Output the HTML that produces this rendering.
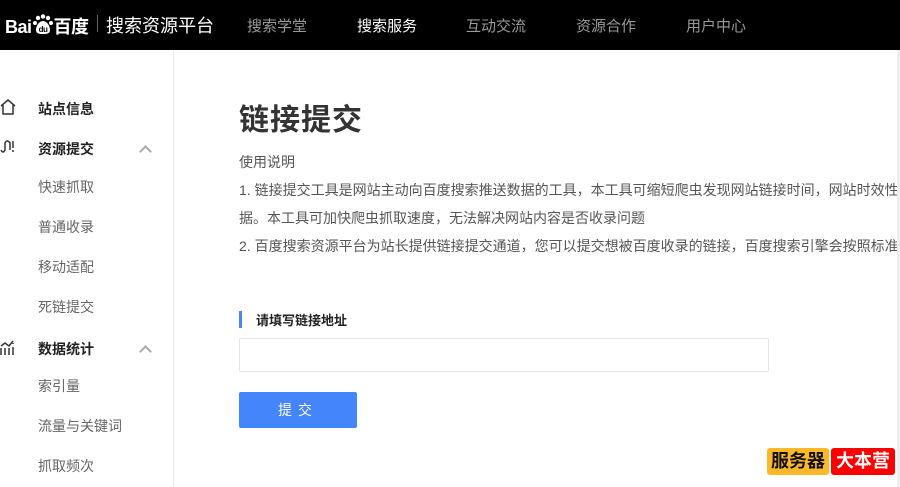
<!DOCTYPE html>
<html><head><meta charset="utf-8"><style>
*{margin:0;padding:0;box-sizing:border-box}
body{width:900px;height:487px;overflow:hidden;background:#fff;font-family:"Liberation Sans","Noto Sans CJK SC",sans-serif;position:relative}
.top{position:absolute;left:0;top:0;width:900px;height:50px;background:#000}
.logo{position:absolute;left:5px;top:13px;color:#fff;font-weight:bold;font-size:18px;letter-spacing:-0.5px;white-space:nowrap}
.sep{position:absolute;left:97px;top:15px;width:1px;height:17px;background:#666}
.ptitle{position:absolute;left:106px;top:12px;color:#fff;font-size:18px}
.nav{position:absolute;top:15px;color:#999;font-size:15px}
.side{position:absolute;left:0;top:50px;width:174px;height:437px;border-right:1px solid #e8e8e8}
.si{position:absolute;left:38px;font-size:14px;color:#666}
.sh{position:absolute;left:38px;font-size:14px;color:#222;font-weight:bold}
.chev{position:absolute;left:141px;width:9px;height:9px;border-left:2px solid #aaa;border-top:2px solid #aaa;transform:rotate(45deg)}
.t{position:absolute;left:239px;top:95px;font-size:30px;font-weight:bold;color:#333;letter-spacing:1px}
.p{position:absolute;left:239px;width:658px;overflow:hidden;font-size:14px;color:#555;white-space:nowrap}
</style></head><body>
<div class="top">
<div class="logo">Bai<svg width="22" height="22" viewBox="0 0 22 22" style="vertical-align:-3px"><circle cx="6" cy="4" r="2.2" fill="#fff"/><circle cx="11" cy="2.5" r="2.2" fill="#fff"/><circle cx="16" cy="4" r="2.2" fill="#fff"/><circle cx="3" cy="9" r="2" fill="#fff"/><circle cx="19" cy="9" r="2" fill="#fff"/><path d="M11 7 C7 7 4 12 4 16 C4 20 8 20 11 20 C14 20 18 20 18 16 C18 12 15 7 11 7Z" fill="#fff"/><text x="11" y="18" font-size="8" text-anchor="middle" fill="#000" font-weight="bold" font-family="Liberation Sans">du</text></svg>百度</div>
<div class="sep"></div>
<div class="ptitle">搜索资源平台</div>
<div class="nav" style="left:247px">搜索学堂</div>
<div class="nav" style="left:357px;color:#fff">搜索服务</div>
<div class="nav" style="left:466px">互动交流</div>
<div class="nav" style="left:576px">资源合作</div>
<div class="nav" style="left:686px">用户中心</div>
</div>
<div class="side">
<svg style="position:absolute;left:0;top:48px" width="16" height="18" viewBox="0 0 16 18"><path d="M1 8 L8 2 L15 8 M3 7 V16 H13 V7" fill="none" stroke="#333" stroke-width="1.5"/></svg>
<div class="sh" style="top:49px">站点信息</div>
<svg style="position:absolute;left:0;top:88px" width="16" height="18" viewBox="0 0 16 18"><path d="M1 12 Q3 16 5 12 V5 Q7 1 10 5 V12 M13 3 V10 M13 12 V14" fill="none" stroke="#333" stroke-width="1.5"/></svg>
<div class="sh" style="top:89px">资源提交</div><div class="chev" style="top:97px"></div>
<div class="si" style="top:127px">快速抓取</div>
<div class="si" style="top:167px">普通收录</div>
<div class="si" style="top:207px">移动适配</div>
<div class="si" style="top:247px">死链提交</div>
<svg style="position:absolute;left:0;top:289px" width="16" height="18" viewBox="0 0 16 18"><path d="M1 16 V9 M5 16 V9 M9 16 V9 M13 16 V8 M1 7 L5 4 L9 7 L13 2 M13 4 V5" fill="none" stroke="#333" stroke-width="1.5"/></svg>
<div class="sh" style="top:289px">数据统计</div><div class="chev" style="top:297px"></div>
<div class="si" style="top:326px">索引量</div>
<div class="si" style="top:366px">流量与关键词</div>
<div class="si" style="top:406px">抓取频次</div>
</div>
<div class="t">链接提交</div>
<div class="p" style="top:152px">使用说明</div>
<div class="p" style="top:180px">1. 链接提交工具是网站主动向百度搜索推送数据的工具，本工具可缩短爬虫发现网站链接时间，网站时效性内容建议使用链接提交工具，实时向搜索推送数</div>
<div class="p" style="top:208px">据。本工具可加快爬虫抓取速度，无法解决网站内容是否收录问题</div>
<div class="p" style="top:236px">2. 百度搜索资源平台为站长提供链接提交通道，您可以提交想被百度收录的链接，百度搜索引擎会按照标准处理，但不保证一定能够收录您提交的链接。</div>
<div style="position:absolute;left:239px;top:311px;width:3px;height:17px;background:#4e85f5"></div>
<div style="position:absolute;left:256px;top:310px;font-size:13px;font-weight:bold;color:#222">请填写链接地址</div>
<div style="position:absolute;left:239px;top:338px;width:530px;height:34px;border:1px solid #e3e3e3;border-radius:2px"></div>
<div style="position:absolute;left:239px;top:392px;width:118px;height:36px;background:#4485fc;border-radius:2px;color:#fff;font-size:14px;text-align:center;line-height:36px;letter-spacing:6px">提交</div>
<div style="position:absolute;left:897px;top:50px;width:3px;height:437px;background:#eee"></div>
<div style="position:absolute;left:767px;top:448px;width:62px;height:27px;background:#fbb829;border-radius:3px;font-size:18px;font-weight:bold;color:#111;text-align:center;line-height:27px">服务器</div>
<div style="position:absolute;left:831px;top:448px;width:64px;height:27px;background:#f00;border-radius:3px;font-size:18px;font-weight:bold;color:#fff;text-align:center;line-height:27px">大本营</div>
</body></html>
